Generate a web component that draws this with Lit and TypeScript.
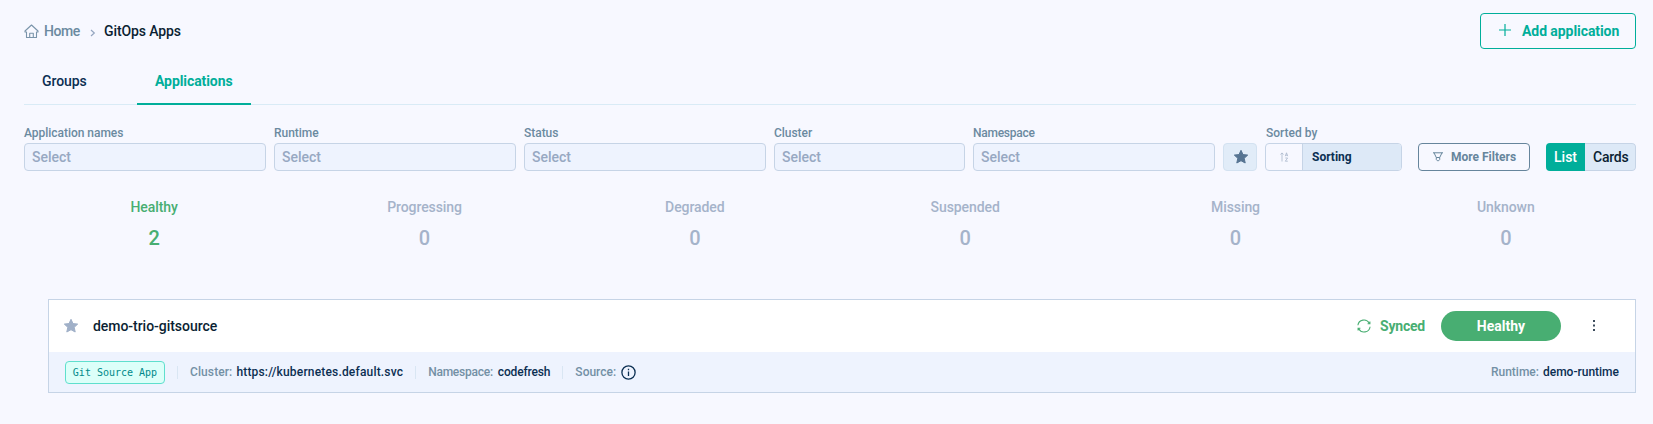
import { LitElement, html, css } from "lit";
import { customElement, property } from "lit/decorators.js";

const starShape = html`<svg width="16" height="16" viewBox="0 0 16 16" fill="currentColor" stroke="currentColor" stroke-linejoin="round" stroke-width="1"><path d="M8 1.300l2 4.300 4.700.5-3.500 3.200 1 4.700L8 11.700 3.800 14l1-4.700L1.300 6.100 6 5.600z"/></svg>`;

@customElement("filter-select")
export class FilterSelect extends LitElement {
  @property() label = "";
  static styles = css`
    :host { display: flex; flex-direction: column; gap: 2px; min-width: 0; }
    .label { font: 500 12px/16px Roboto, sans-serif; color: #6b8a9f; white-space: nowrap; letter-spacing: -0.03px; }
    .tight { letter-spacing: -0.25px; }
    .field { height: 28px; box-sizing: border-box; border: 1px solid #c6d4e6; border-radius: 4px; background: #eef3fe; padding: 0 7px; font: 500 14px/26px Roboto, sans-serif; color: #97a8c2; }
  `;
  render() {
    return html`<div class="label ${this.label === "Namespace" ? "tight" : ""}">${this.label}</div><div class="field">Select</div>`;
  }
}

@customElement("app-root")
export class AppRoot extends LitElement {
  static styles = css`
    :host { display: block; height: 424px; box-sizing: border-box; padding: 0 17px 0 24px; background: #f7f8ff; font: 500 14px/20px Roboto, sans-serif; color: #0b1f33; white-space: nowrap; overflow: hidden; }
    * { box-sizing: border-box; }
    svg { display: block; flex: none; }
    .header { display: flex; align-items: center; height: 62px; }
    .home-icon { color: #7a94aa; margin-right: 5px; }
    .home { color: #6b8a9f; letter-spacing: -0.42px; width: 46px; }
    .chev { margin: 3px 6px 0 0; color: #94a6c0; }
    .here { letter-spacing: -0.1px; }
    .add { margin-left: auto; width: 156px; height: 36px; border: 1px solid #00ae9a; border-radius: 4px; display: flex; align-items: center; padding-left: 18px; gap: 11px; color: #00ae9a; font-weight: 700; letter-spacing: -0.07px; }
    .add svg { margin-top: -2px; }
    .tabs { display: flex; gap: 32px; height: 43px; box-shadow: inset 0 -1px #d9ebf6; }
    .tab { padding: 0 18px; line-height: 38px; width: 81px; color: #0b2f52; letter-spacing: -0.08px; }
    .tab.active { width: 114px; color: #00ae9a; font-weight: 700; border-bottom: 2px solid #00ae9a; }
    .filters { margin-top: 20px; display: grid; grid-template-columns: 242px 242px 242px 191px 242px 34px 137px 120px 98px; column-gap: 8px; align-items: end; }
    .fav { height: 28px; border: 1px solid #d3e2f1; border-radius: 4px; background: #e1ecf8; color: #567492; display: grid; place-items: center; padding-left: 1px; }
    .sort { display: flex; flex-direction: column; gap: 2px; }
    .sort-label { font-size: 12px; line-height: 16px; color: #6b8a9f; padding-left: 1px; }
    .sort-box { display: flex; height: 28px; border: 1px solid #c6d4e6; border-radius: 4px; overflow: hidden; }
    .order { width: 37px; border-right: 1px solid #c6d4e6; display: grid; place-items: center; color: #a8b6ca; }
    .sort-by { flex: 1; background: #dde9f7; padding-left: 9px; font-weight: 700; font-size: 12px; line-height: 26px; color: #0b2f52; }
    .more { margin-left: 8px; height: 28px; border: 1px solid #66859c; border-radius: 4px; display: flex; align-items: center; padding-left: 13px; gap: 7px; color: #66859c; font-weight: 700; font-size: 12px; }
    .toggle { margin-left: 8px; height: 28px; display: flex; border-radius: 4px; overflow: hidden; line-height: 28px; }
    .list { width: 39px; padding-left: 8px; background: #00ae9a; color: #fff; }
    .cards { flex: 1; background: #dde9f7; border: 1px solid #c6d4e6; border-left: 0; border-radius: 0 4px 4px 0; line-height: 26px; padding-left: 8px; letter-spacing: -0.25px; color: #0b1f33; }
    .stats { display: grid; grid-template-columns: repeat(6, 1fr); margin: 26px -5px 0 -5px; text-align: center; color: #a5b3ca; }
    .stat .t { letter-spacing: -0.08px; }
    .stat .n { font-size: 20px; line-height: 24px; margin-top: 9px; }
    .good { color: #48ae72; }
    .card { margin: 49px 0 0 24px; height: 94px; border: 1px solid #c6d4e6; }
    .top { height: 52px; background: #fff; display: flex; align-items: center; padding-left: 14px; }
    .top .star { color: #a0b0c8; margin-right: 14px; }
    .name { letter-spacing: -0.04px; }
    .sync { margin-left: auto; color: #48ae72; margin-right: 9px; }
    .synced { color: #48ae72; font-weight: 700; letter-spacing: -0.2px; width: 61px; }
    .pill { width: 120px; height: 30px; border-radius: 15px; background: #48ae72; color: #fff; font-weight: 700; text-align: center; line-height: 30px; }
    .dots { margin: -2px 40px 0 32px; color: #3c4c5c; }
    .bottom { height: 40px; background: #eef3fe; display: flex; align-items: center; padding: 0 16px; font-size: 12px; color: #7390a5; }
    .tag { width: 100px; height: 23px; margin-top: 1px; border: 1px solid #5fdfcd; border-radius: 4px; background: #dcfff9; color: #00898a; font: 10px/21px "DejaVu Sans Mono", monospace; text-align: center; }
    .sep { width: 1px; height: 13px; background: #d9e6f3; margin: 0 12px; }
    .v { color: #0b2f52; margin-left: 4px; }
    .k { letter-spacing: 0.1px; }
    .wide { letter-spacing: 0.18px; }
    .tight { letter-spacing: -0.25px; }
    .snug { letter-spacing: -0.15px; margin-left: 5px; }
    .runtime { margin-left: auto; }
    .info { color: #0b2f52; margin-left: 5px; }
  `;

  private stats: [string, number][] = [
    ["Healthy", 2], ["Progressing", 0], ["Degraded", 0],
    ["Suspended", 0], ["Missing", 0], ["Unknown", 0],
  ];

  render() {
    return html`
      <div class="header">
        <svg class="home-icon" width="15" height="15" viewBox="0 0 15 15" fill="none" stroke="currentColor" stroke-width="1.1" stroke-linejoin="round" stroke-linecap="round"><path d="M1 7L7.500 1 14 7v1h-1.500v5.500h-10V8H1zM5.700 13.300V9.300h3.600v4"/></svg>
        <span class="home">Home</span>
        <svg class="chev" width="8" height="8" viewBox="0 0 8 8" fill="none" stroke="currentColor" stroke-width="1.200"><path d="M1 1L4.300 4 1 7"/></svg>
        <span class="here">GitOps Apps</span>
        <div class="add"><svg width="12" height="12" viewBox="0 0 12 12" stroke="currentColor" stroke-width="1.200"><path d="M0 6h12M6 0v12"/></svg>Add application</div>
      </div>
      <div class="tabs"><div class="tab">Groups</div><div class="tab active">Applications</div></div>
      <div class="filters">
        ${["Application names", "Runtime", "Status", "Cluster", "Namespace"].map((l) => html`<filter-select label=${l}></filter-select>`)}
        <div class="fav">${starShape}</div>
        <div class="sort">
          <div class="sort-label">Sorted by</div>
          <div class="sort-box">
            <div class="order"><svg width="9" height="10" viewBox="0 0 9 10" fill="none" stroke="currentColor" stroke-width=".8"><path d="M2 9.500V1M.5 2.500L2 .9l1.500 1.600M5.300 4.200L6.500.8l1.200 3.400M5.700 3.200h1.600M5.300 6h2.300L5.300 9.200h2.500"/></svg></div>
            <div class="sort-by">Sorting</div>
          </div>
        </div>
        <div class="more"><svg width="12" height="10" viewBox="0 0 12 10" fill="none" stroke="currentColor" stroke-width="1"><path d="M1 .8h10M2 .8l2.300 4.700h3.400L10 .8M4.300 5.500v2l1 1.200h1.400l1-1.200v-2"/></svg>More Filters</div>
        <div class="toggle"><div class="list">List</div><div class="cards">Cards</div></div>
      </div>
      <div class="stats">
        ${this.stats.map(([t, n]) => html`<div class="stat ${n ? "good" : ""}"><div class="t">${t}</div><div class="n">${n}</div></div>`)}
      </div>
      <div class="card">
        <div class="top">
          <span class="star">${starShape}</span><span class="name">demo-trio-gitsource</span>
          <svg class="sync" width="14" height="14" viewBox="0 0 14 14" fill="none" stroke="currentColor" stroke-width="1.100"><path d="M.9 6.300A6.100 6.100 0 0 1 12.300 4.200M13.100 7.700A6.100 6.100 0 0 1 1.700 9.800M12.900 2.400v2.300h-2.300M1.100 11.600V9.300h2.300"/></svg>
          <span class="synced">Synced</span>
          <div class="pill">Healthy</div>
          <svg class="dots" width="2" height="11" viewBox="0 0 2 11" fill="currentColor"><path d="M0 0h2v2H0zM0 4.500h2v2H0zM0 9h2v2H0z"/></svg>
        </div>
        <div class="bottom">
          <span class="tag">Git Source App</span><i class="sep"></i>
          <span class="k">Cluster:</span><span class="v wide">https://kubernetes.default.svc</span><i class="sep"></i>
          <span class="tight">Namespace:</span><span class="v snug">codefresh</span><i class="sep"></i>
          <span>Source:</span>
          <svg class="info" width="15" height="15" viewBox="0 0 15 15" fill="none" stroke="currentColor" stroke-width="1.300"><circle cx="7.500" cy="7.500" r="6.600"/><path d="M7.500 6.500v4.500M7.500 3.800v1.400"/></svg>
          <span class="runtime">Runtime:</span><span class="v">demo-runtime</span>
        </div>
      </div>`;
  }
}
